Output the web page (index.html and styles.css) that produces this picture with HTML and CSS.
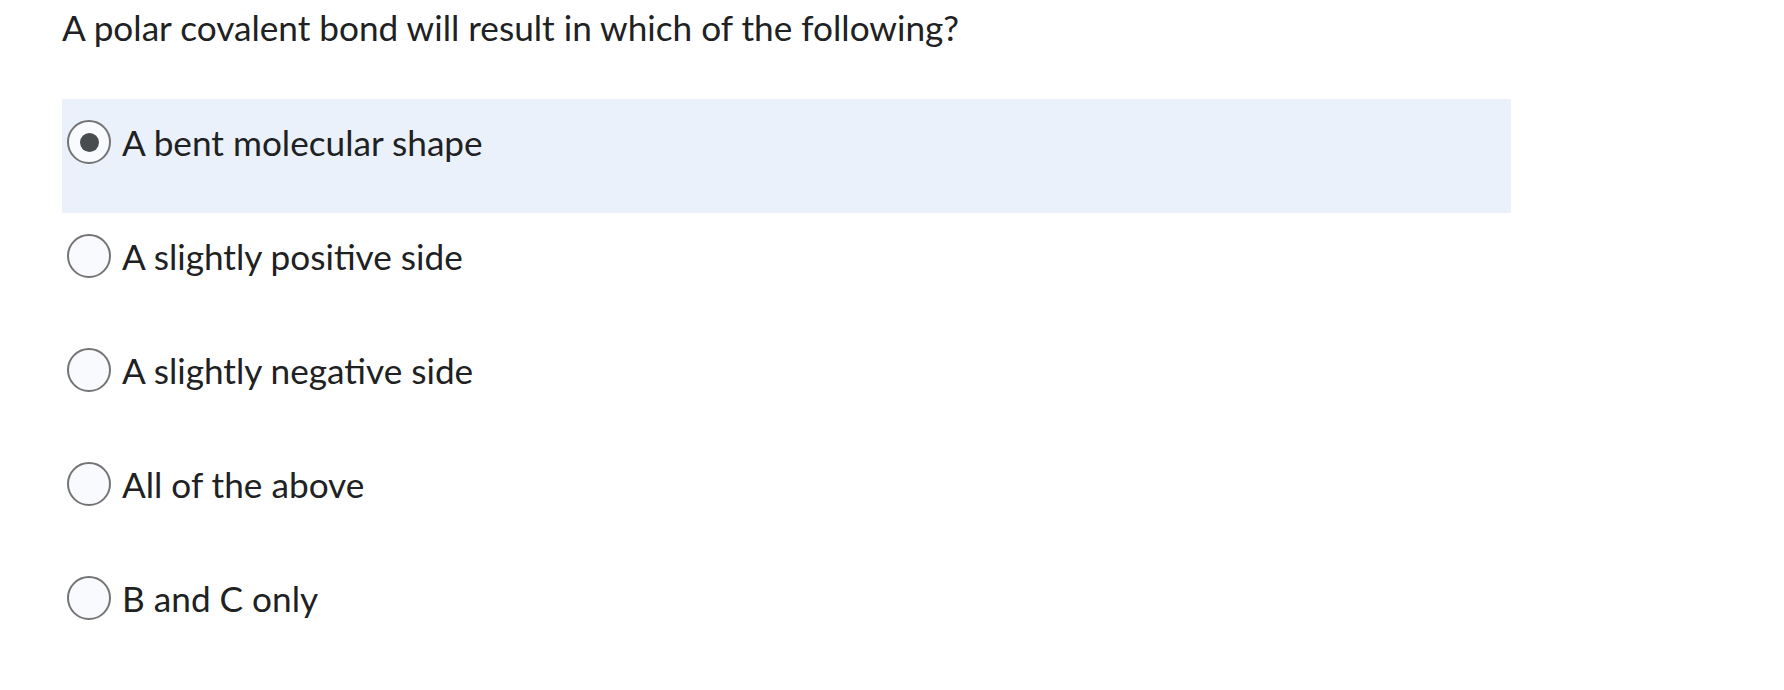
FILE: index.html
```html
<!DOCTYPE html>
<html>
<head>
<meta charset="utf-8">
<link rel="stylesheet" href="styles.css">
</head>
<body>
<div class="quiz">
  <div class="question">A polar covalent bond will result in which of the following?</div>
  <div class="options">
    <label class="option selected"><span class="radio"><span class="dot"></span></span><span class="text">A bent molecular shape</span></label>
    <label class="option"><span class="radio"></span><span class="text">A slightly positive side</span></label>
    <label class="option"><span class="radio"></span><span class="text">A slightly negative side</span></label>
    <label class="option"><span class="radio"></span><span class="text">All of the above</span></label>
    <label class="option"><span class="radio"></span><span class="text">B and C only</span></label>
  </div>
</div>
</body>
</html>
```

FILE: styles.css
```css
html, body {
  margin: 0;
  padding: 0;
  background: #ffffff;
}
.quiz {
  padding: 0 0 0 62px;
  width: 1449px;
  font-family: Lato, "Noto Sans", sans-serif;
  color: #202122;
}
.question {
  font-size: 35.2px;
  line-height: 42px;
  padding-top: 6px;
  height: 99px;
  box-sizing: border-box;
}
.options {
  display: flex;
  flex-direction: column;
}
.option {
  display: flex;
  height: 114px;
  padding: 21px 0 0 5px;
  box-sizing: border-box;
  align-items: flex-start;
}
.option.selected {
  background: #eaf1fb;
}
.radio {
  width: 44px;
  height: 44px;
  box-sizing: border-box;
  border: 2px solid #747474;
  border-radius: 50%;
  background: #f9fafe;
  display: flex;
  align-items: center;
  justify-content: center;
  flex: none;
}
.dot {
  width: 19px;
  height: 19px;
  border-radius: 50%;
  background: #494c4e;
}
.text {
  font-size: 35.2px;
  line-height: 44px;
  margin-left: 11px;
}
```
